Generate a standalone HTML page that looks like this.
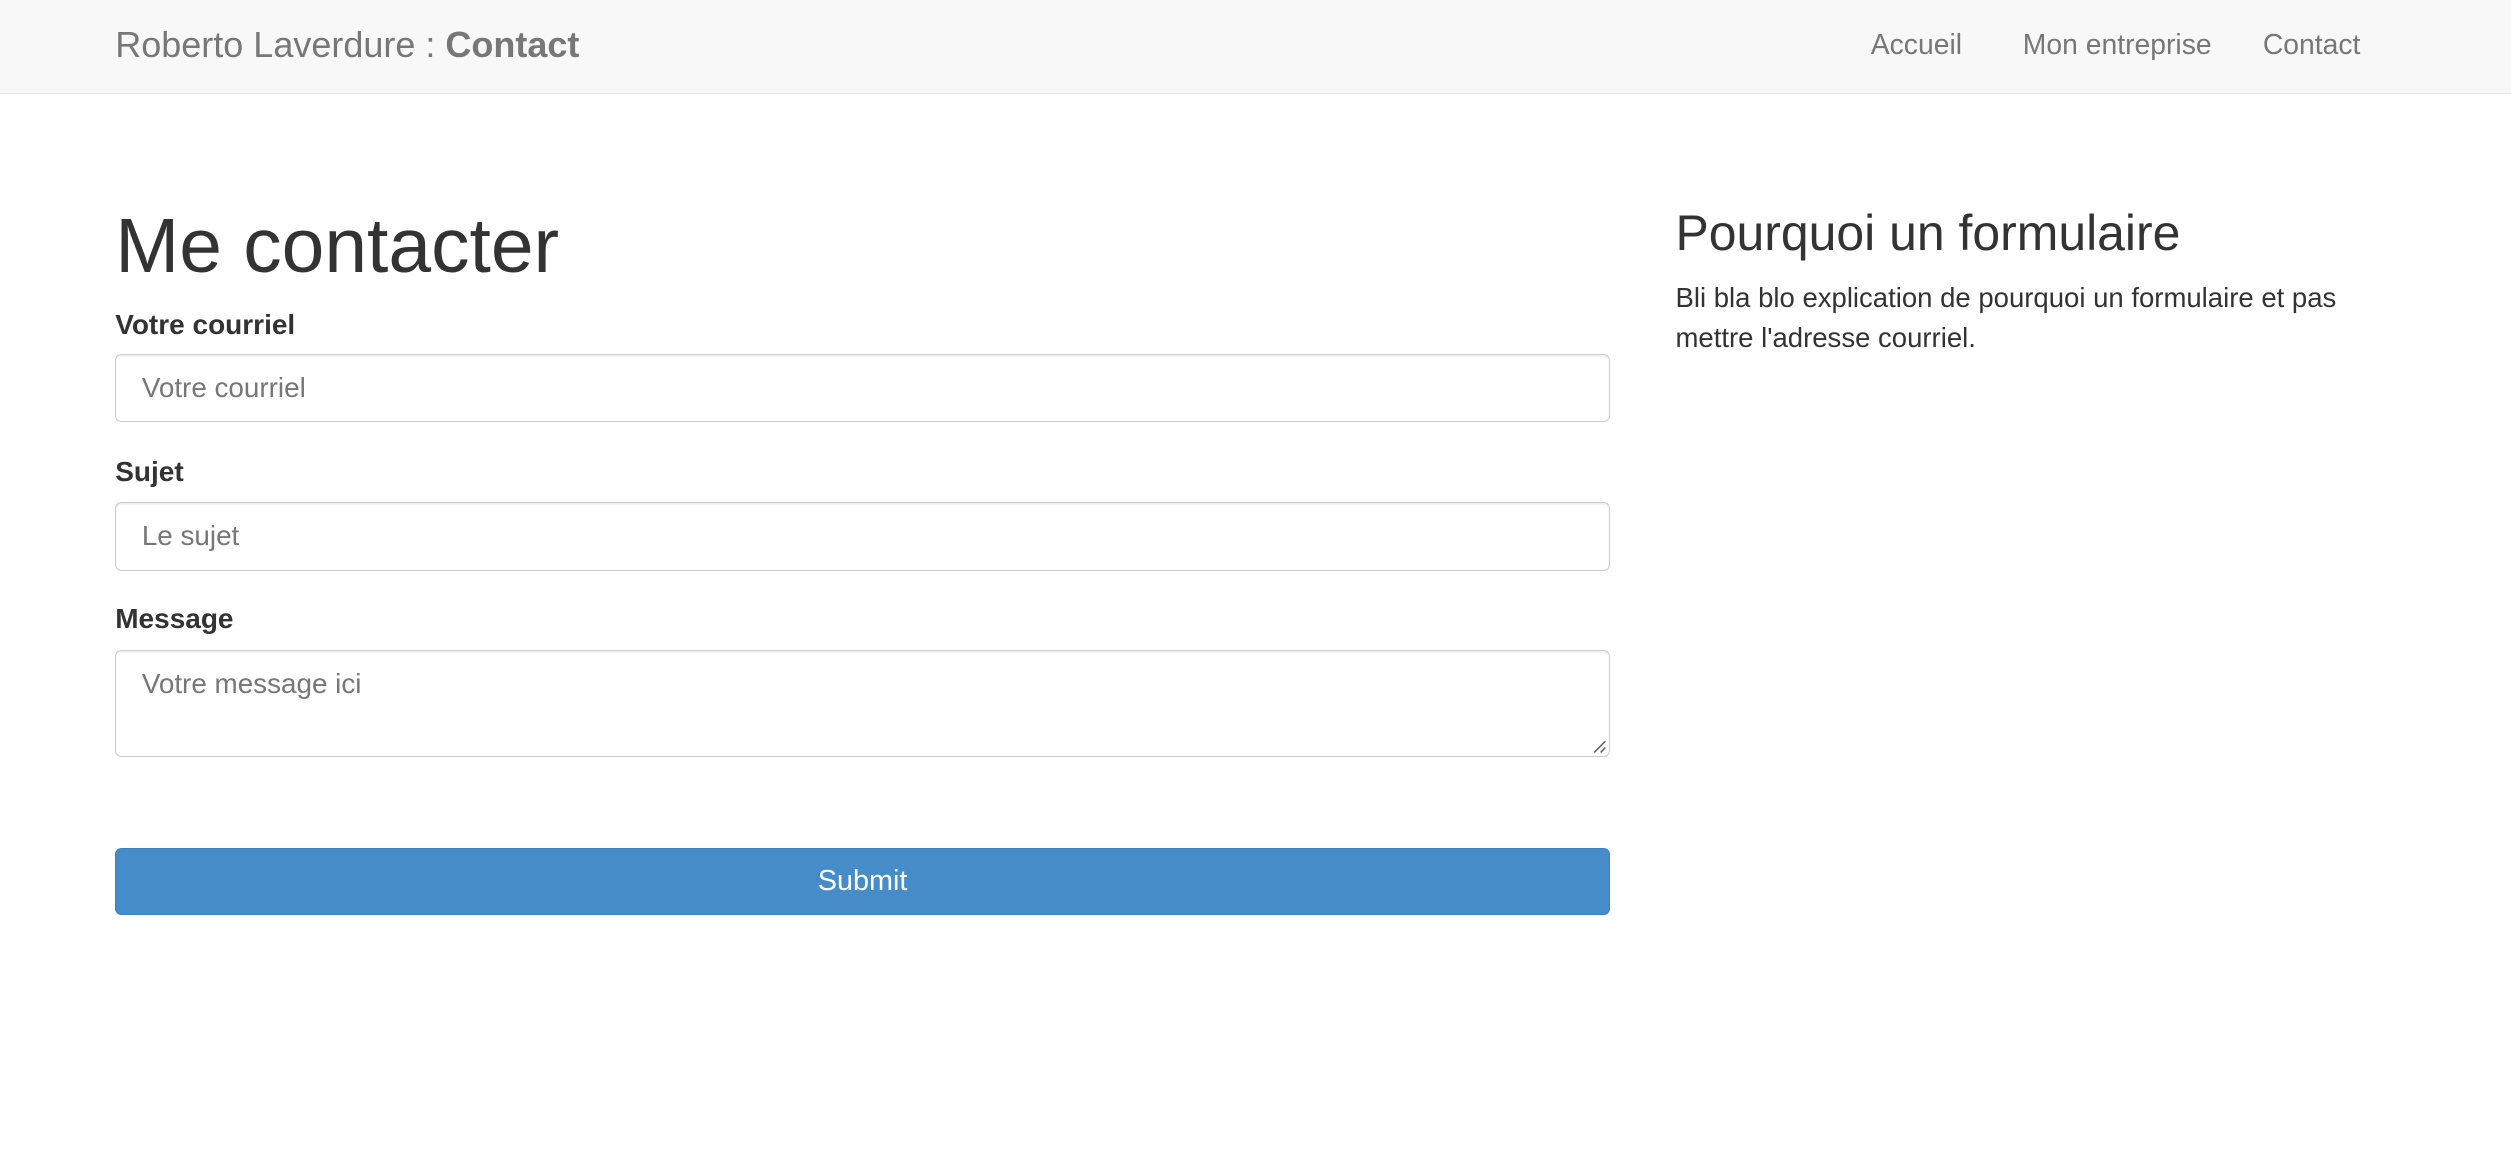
<!DOCTYPE html>
<html><head><meta charset="utf-8"><style>
html{zoom:1.6003}
body{margin:0;width:1569px;height:720px;background:#fff;font-family:"Liberation Sans",Helvetica,Arial,sans-serif;color:#333;position:relative;overflow:hidden}
.nav{position:absolute;left:0;top:0;width:1569px;height:58px;background:#f8f8f8;border-bottom:1px solid #e7e7e7}
.brand{position:absolute;left:72px;top:15px;font-size:22.5px;color:#777;line-height:26px}
.nl{position:absolute;top:18px;font-size:17.7px;color:#777;line-height:20px}
h1{position:absolute;left:72px;top:126px;margin:0;font-size:48px;font-weight:normal;line-height:56px}
h3{position:absolute;left:1047px;top:128px;margin:0;font-size:31.2px;font-weight:normal;line-height:36px}
p{position:absolute;left:1047px;top:174px;margin:0;font-size:17.2px;line-height:25px;width:435px}
label{position:absolute;left:72px;font-weight:bold;font-size:17.5px;line-height:20px}
.in{position:absolute;left:72px;width:934px;border:1px solid #ccc;border-radius:4px;box-shadow:inset 0 1px 1px rgba(0,0,0,.075);background:#fff;color:#777;font-size:17.4px;box-sizing:border-box;padding-left:16px}
.btn{position:absolute;left:72px;top:530px;width:934px;height:42px;box-sizing:border-box;background:#468cc8;border:1px solid #3a7fbe;border-radius:4px;color:#fff;font-size:18px;text-align:center;line-height:40px}
</style></head><body>
<div class="nav">
<div class="brand">Roberto Laverdure : <b>Contact</b></div>
<div class="nl" style="left:1169px">Accueil</div>
<div class="nl" style="left:1264px">Mon entreprise</div>
<div class="nl" style="left:1414px">Contact</div>
</div>
<h1>Me contacter</h1>
<label style="top:193px">Votre courriel</label>
<div class="in" style="top:221px;height:43px;line-height:41px">Votre courriel</div>
<label style="top:285px">Sujet</label>
<div class="in" style="top:314px;height:43px;line-height:41px">Le sujet</div>
<label style="top:377px">Message</label>
<div class="in" style="top:406px;height:67px;line-height:20px;padding-top:11px">Votre message ici
<svg style="position:absolute;right:1px;bottom:1px" width="10" height="10" viewBox="0 0 10 10"><path d="M2 9L9 2M6 9L9 6" stroke="#666" stroke-width="1"/></svg></div>
<div class="btn">Submit</div>
<h3>Pourquoi un formulaire</h3>
<p>Bli bla blo explication de pourquoi un formulaire et pas mettre l'adresse courriel.</p>
</body></html>
